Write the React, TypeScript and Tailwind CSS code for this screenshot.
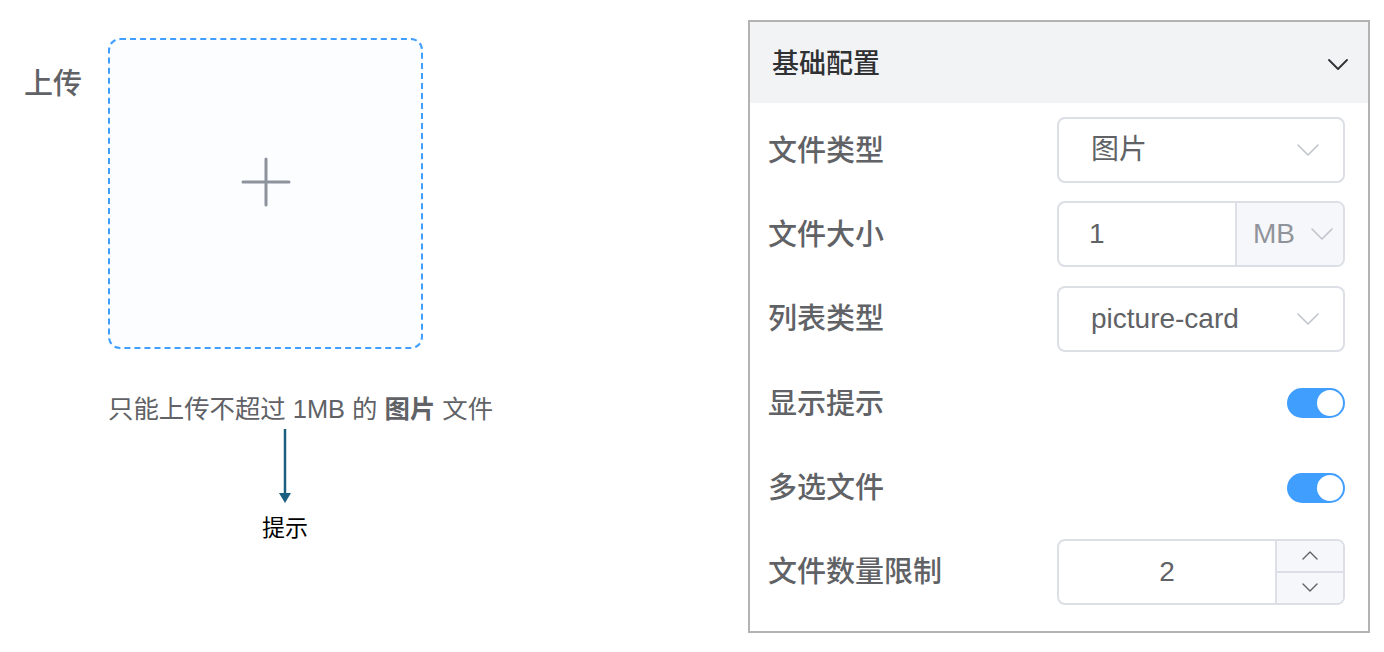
import React from 'react';

const FONT = '"Liberation Sans", "Noto Sans CJK SC", sans-serif';

function Chevron({ up = false, className = '', w = 22, h = 12, stroke = '#c0c4cc', sw = 1.6 }: {
  up?: boolean;
  className?: string;
  w?: number;
  h?: number;
  stroke?: string;
  sw?: number;
}) {
  return (
    <svg width={w} height={h} viewBox={`0 0 ${w} ${h}`} className={className} fill="none">
      <polyline
        points={up ? `1,${h - 1} ${w / 2},1 ${w - 1},${h - 1}` : `1,1 ${w / 2},${h - 1} ${w - 1},1`}
        stroke={stroke}
        strokeWidth={sw}
        strokeLinecap="round"
        strokeLinejoin="round"
      />
    </svg>
  );
}

function Row({ label, children }: { label: string; children: React.ReactNode }) {
  return (
    <div className="flex h-[66px] items-center justify-between">
      <span className="pt-[2px] text-[29px] font-medium leading-none text-[#606266]">{label}</span>
      {children}
    </div>
  );
}

function SelectBox({ value }: { value: string }) {
  return (
    <div className="flex h-[66px] w-[288px] items-center justify-between rounded-[8px] border-2 border-[#dcdfe6] bg-white pl-[32px] pr-[24px]">
      <span className="text-[28px] leading-none text-[#606266]">{value}</span>
      <Chevron />
    </div>
  );
}

function Toggle() {
  return (
    <div className="flex h-[30px] w-[58px] items-center justify-end rounded-full bg-[#409eff] pr-[2px]">
      <div className="h-[26px] w-[26px] rounded-full bg-white" />
    </div>
  );
}

export default function App() {
  return (
    <div className="flex h-[652px] w-[1384px] bg-white" style={{ fontFamily: FONT }}>
      {/* Left: upload */}
      <div className="w-[748px] shrink-0 pl-[24px] pt-[38px]">
        <div className="flex">
          <div className="flex h-[92px] w-[84px] items-center">
            <span className="text-[29px] font-medium leading-none text-[#606266]">上传</span>
          </div>
          <div className="flex flex-col">
            <div className="flex h-[311px] w-[315px] justify-center rounded-[12px] border-2 border-dashed border-[#409eff] bg-[#fbfdff] pt-[117px]">
              <svg width="50" height="50" viewBox="0 0 50 50">
                <line x1="25" y1="2" x2="25" y2="48" stroke="#8c939d" strokeWidth="3" strokeLinecap="round" />
                <line x1="2" y1="25" x2="48" y2="25" stroke="#8c939d" strokeWidth="3" strokeLinecap="round" />
              </svg>
            </div>
            <div className="mt-[45px] whitespace-nowrap text-[25.4px] leading-[30px] text-[#606266]">
              只能上传不超过 1MB 的 <b className="font-bold">图片</b> 文件
            </div>
            <div className="ml-[139px] mt-[5px] flex w-[76px] flex-col items-center">
              <svg width="14" height="74" viewBox="0 0 14 74">
                <line x1="7" y1="0" x2="7" y2="66" stroke="#1a5f80" strokeWidth="2.5" />
                <polygon points="1,64 13,64 7,74" fill="#1a5f80" />
              </svg>
              <div className="mt-[10px] text-[23px] leading-[30px] text-black">提示</div>
            </div>
          </div>
        </div>
      </div>

      {/* Right: config panel */}
      <div className="mt-[20px] flex h-[613px] w-[622px] shrink-0 flex-col border-2 border-[#b3b3b3]">
        <div className="flex h-[81px] items-center justify-between bg-[#f2f3f5] pl-[22px] pr-[20px] pt-[3px]">
          <span className="text-[27px] font-medium leading-none text-[#303133]">基础配置</span>
          <Chevron w={20} h={11} stroke="#303133" sw={1.8} />
        </div>
        <div className="flex flex-col gap-[18.4px] pl-[18px] pr-[23px] pt-[14px]">
          <Row label="文件类型">
            <SelectBox value="图片" />
          </Row>
          <Row label="文件大小">
            <div className="flex h-[66px] w-[288px] overflow-hidden rounded-[8px] border-2 border-[#dcdfe6] bg-white">
              <div className="flex flex-1 items-center pl-[30px] text-[28px] leading-none text-[#606266]">1</div>
              <div className="flex w-[108px] items-center justify-between border-l-2 border-[#dcdfe6] bg-[#f5f7fa] pl-[16px] pr-[10px]">
                <span className="text-[28px] leading-none text-[#909399]">MB</span>
                <Chevron />
              </div>
            </div>
          </Row>
          <Row label="列表类型">
            <SelectBox value="picture-card" />
          </Row>
          <Row label="显示提示">
            <Toggle />
          </Row>
          <Row label="多选文件">
            <Toggle />
          </Row>
          <Row label="文件数量限制">
            <div className="flex h-[66px] w-[288px] overflow-hidden rounded-[8px] border-2 border-[#dcdfe6] bg-white">
              <div className="flex flex-1 items-center justify-center text-[28px] leading-none text-[#606266]">2</div>
              <div className="flex w-[68px] flex-col border-l-2 border-[#dcdfe6] bg-[#f5f7fa]">
                <div className="flex flex-1 items-center justify-center border-b-2 border-[#dcdfe6]">
                  <Chevron up w={16} h={9} stroke="#606266" sw={1.4} />
                </div>
                <div className="flex flex-1 items-center justify-center">
                  <Chevron w={16} h={9} stroke="#606266" sw={1.4} />
                </div>
              </div>
            </div>
          </Row>
        </div>
      </div>
    </div>
  );
}
